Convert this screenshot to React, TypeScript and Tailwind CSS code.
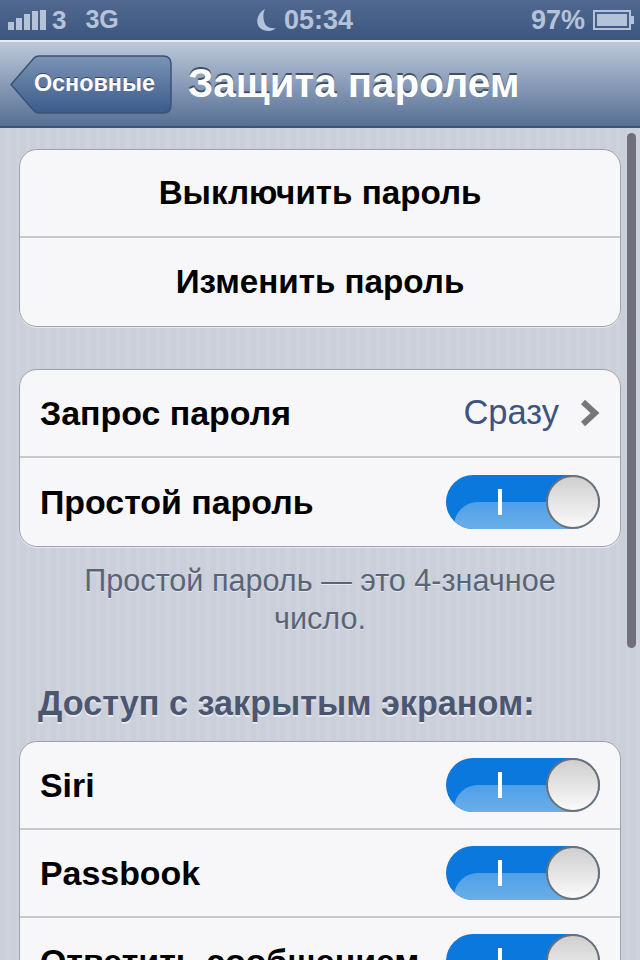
const font = "font-['Liberation_Sans',Arial,sans-serif]";

const Toggle = () => {
  return (
    <div className="relative h-[54px] w-[154px] shrink-0 overflow-hidden rounded-full bg-[#0a78dc]">
      <div className="absolute left-[8px] right-0 top-[27px] h-[27px] rounded-tl-[24px] bg-gradient-to-b from-[#4f9fe8] to-[#6aaee8]" />
      <div className="absolute left-[52px] top-[14px] h-[26px] w-[4px] bg-white" />
      <div className="absolute right-0 top-0 h-[54px] w-[54px] rounded-full border-2 border-[#6f7074] bg-gradient-to-b from-[#cfcfcf] to-[#fafafa]" />
    </div>
  );
};

const Row = ({
  children,
  center,
  last,
}: {
  children: React.ReactNode;
  center?: boolean;
  last?: boolean;
}) => {
  return (
    <div
      className={`flex h-[88px] items-center px-[20px] ${center ? "justify-center" : "justify-between"} ${last ? "" : "border-b-2 border-[#c9c9cc]"}`}
    >
      {children}
    </div>
  );
};

const Group = ({ children }: { children: React.ReactNode }) => {
  return (
    <div className="mx-[19px] overflow-hidden rounded-[18px] border border-[#9fa1a9] bg-[#f7f7f9] shadow-[0_1px_0_#e8eaf0]">
      {children}
    </div>
  );
};

const RowText = ({ children }: { children: React.ReactNode }) => {
  return <span className="text-[33.9px] font-bold text-black">{children}</span>;
};

const CenterText = ({ children }: { children: React.ReactNode }) => {
  return <span className="text-[33.2px] font-bold text-black">{children}</span>;
};

const StatusBar = () => {
  return (
    <div className="flex h-[42px] items-center justify-between border-b-2 border-[#e9edf3] bg-gradient-to-b from-[#51698f] to-[#3c5680] pl-[8px] pr-[6px] text-[26px] font-bold text-[#b5c3da]">
      <div className="flex w-[206px] items-center">
        <div className="flex items-end gap-[2px]">
          <div className="h-[8px] w-[6px] bg-[#b5c3da]" />
          <div className="h-[12px] w-[6px] bg-[#b5c3da]" />
          <div className="h-[16px] w-[6px] bg-[#b5c3da]" />
          <div className="h-[19px] w-[6px] bg-[#b5c3da]" />
          <div className="h-[20px] w-[6px] bg-[#b5c3da]" />
        </div>
        <span className="ml-[6px]">3</span>
        <span className="ml-[19px] text-[25px]">3G</span>
      </div>
      <div className="flex items-center">
        <svg width="22" height="24" viewBox="0 0 22 24" className="mr-[7px]">
          <path d="M10 1C2 5 0 15 5 20c5 4 12 4 16 0-7 1-11-2-12-7C8 9 8 5 10 1z" fill="#b5c3da" />
        </svg>
        <span className="text-[27px]">05:34</span>
      </div>
      <div className="flex w-[240px] items-center justify-end">
        <span className="text-[27px]">97%</span>
        <div className="ml-[8px] flex items-center">
          <div className="h-[20px] w-[38px] border-2 border-[#b5c3da] p-[2px]">
            <div className="h-full w-full bg-[#b5c3da]" />
          </div>
          <div className="h-[8px] w-[3px] bg-[#b5c3da]" />
        </div>
      </div>
    </div>
  );
};

const NavBar = () => {
  return (
    <div className="flex h-[86px] items-center border-b-2 border-[#3f5578] bg-gradient-to-b from-[#bdc9da] to-[#587095] pl-[10px]">
      <div className="relative flex h-[59px] w-[162px] items-center justify-end pr-[17px]">
        <svg width="162" height="59" viewBox="0 0 162 59" className="absolute left-0 top-0">
          <defs>
            <linearGradient id="back" x1="0" y1="0" x2="0" y2="1">
              <stop offset="0" stopColor="#7c93b4" />
              <stop offset="1" stopColor="#3b5b8c" />
            </linearGradient>
          </defs>
          <path
            d="M1 29.5 L24 3 Q26 1 29 1 H153 Q161 1 161 9 V50 Q161 58 153 58 H29 Q26 58 24 56 Z"
            fill="url(#back)"
            stroke="#3c5274"
            strokeWidth="1.5"
          />
        </svg>
        <span className="relative text-[23.4px] font-bold text-white [text-shadow:0_-1px_0_#2f4668]">Основные</span>
      </div>
      <span className="ml-[16px] text-[40.3px] font-bold text-white [text-shadow:0_-2px_0_#3f4f68]">Защита паролем</span>
    </div>
  );
};

export default function App() {
  return (
    <div className={`relative h-[960px] w-[640px] overflow-hidden bg-[#cbd0db] ${font}`}>
      <StatusBar />
      <NavBar />

      <div className="flex flex-col bg-[repeating-linear-gradient(90deg,#cacfda_0px,#cacfda_6px,#ced2dd_6px,#ced2dd_10px)] pt-[21px]">
        <Group>
          <Row center>
            <CenterText>Выключить пароль</CenterText>
          </Row>
          <Row center last>
            <CenterText>Изменить пароль</CenterText>
          </Row>
        </Group>

        <div className="h-[42px]" />

        <Group>
          <Row>
            <RowText>Запрос пароля</RowText>
            <div className="flex items-center">
              <span className="text-[34.5px] text-[#3d5480]">Сразу</span>
              <svg width="20" height="28" viewBox="0 0 20 28" className="ml-[21px]">
                <path d="M3 3 L15 14 L3 25" fill="none" stroke="#77777b" strokeWidth="6" />
              </svg>
            </div>
          </Row>
          <Row last>
            <RowText>Простой пароль</RowText>
            <Toggle />
          </Row>
        </Group>

        <p className="mt-[14px] px-[60px] text-center text-[30.6px] leading-[38px] text-[#5a6477] [text-shadow:0_1px_0_#e6e9f0]">
          Простой пароль — это 4-значное число.
        </p>

        <h2 className="ml-[38px] mt-[46px] text-[34.2px] leading-[40px] font-bold text-[#4d566f] [text-shadow:0_2px_0_#e6e9f0]">
          Доступ с закрытым экраном:
        </h2>

        <div className="h-[18px]" />

        <Group>
          <Row>
            <RowText>Siri</RowText>
            <Toggle />
          </Row>
          <Row>
            <RowText>Passbook</RowText>
            <Toggle />
          </Row>
          <Row>
            <RowText>Ответить сообщением</RowText>
            <Toggle />
          </Row>
        </Group>
      </div>

      {/* scroll indicator sits over the list */}
      <div className="absolute left-[627px] top-[133px] h-[515px] w-[9px] rounded-full bg-[#6f707c]" />
    </div>
  );
}
